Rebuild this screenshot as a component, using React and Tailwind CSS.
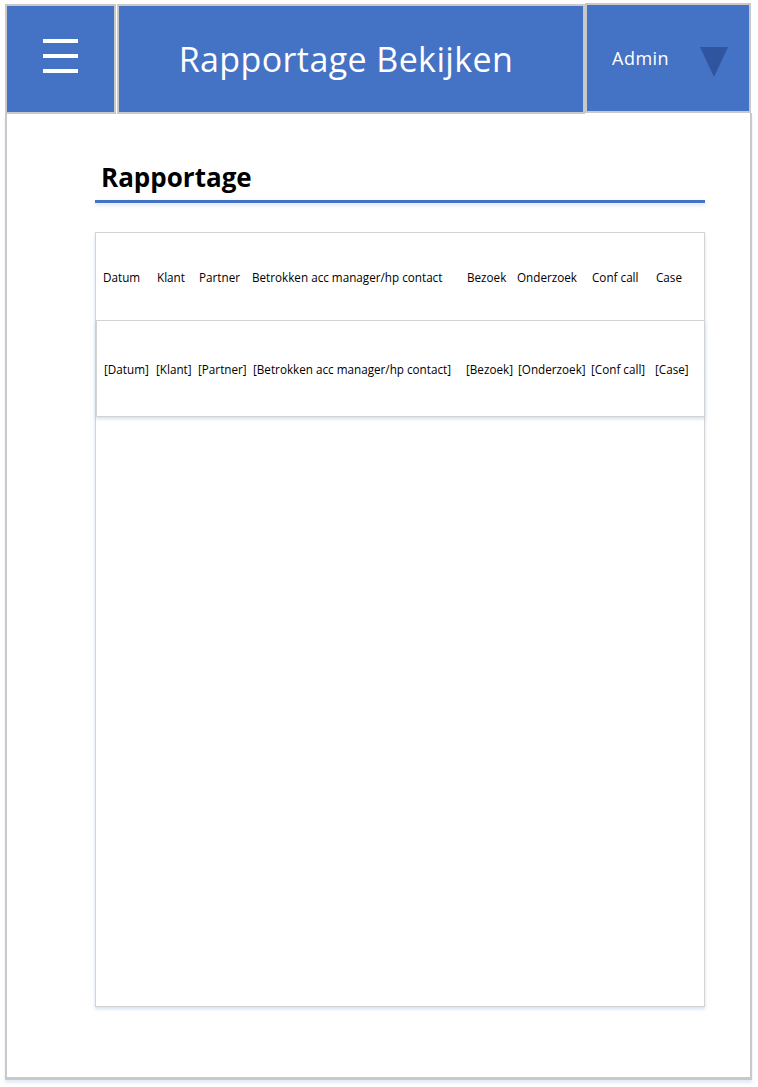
import React from 'react';

const columns = [
  { label: 'Datum', value: '[Datum]' },
  { label: 'Klant', value: '[Klant]' },
  { label: 'Partner', value: '[Partner]' },
  { label: 'Betrokken acc manager/hp contact', value: '[Betrokken acc manager/hp contact]' },
  { label: 'Bezoek', value: '[Bezoek]' },
  { label: 'Onderzoek', value: '[Onderzoek]' },
  { label: 'Conf call', value: '[Conf call]' },
  { label: 'Case', value: '[Case]' },
];

// column tracks measured off the mockup
const gridCols = 'grid grid-cols-[52px_42px_55px_213px_52px_73px_64px_1fr]';

const App = () => {
  return (
    <div
      className="min-h-[1087px] w-[758px] bg-white"
      style={{ fontFamily: '"Open Sans", "Noto Sans", sans-serif' }}
    >
      <div className="pl-[5px] pt-[4px]">
        {/* header bar */}
        <div className="flex h-[110px] w-[746px] text-white">
          <div className="flex w-[111px] items-center justify-center border-2 border-[#c9c9c9] bg-[#4472c4]">
            <svg width="38" height="36" viewBox="0 0 38 36" className="ml-[1px] mt-[-6px]">
              <rect x="1" y="1" width="35" height="4" fill="#fff" />
              <rect x="1" y="16" width="35" height="4" fill="#fff" />
              <rect x="1" y="31" width="35" height="4" fill="#fff" />
            </svg>
          </div>
          <div className="ml-[1px] flex w-[468px] items-center justify-center border-2 border-[#c9c9c9] bg-[#4472c4] pr-[10px]">
            <h1 className="text-[34px] tracking-[0.4px]">Rapportage Bekijken</h1>
          </div>
          <div className="mt-[-1px] flex h-[110px] w-[166px] items-center border-2 border-[#c9c9c9] bg-[#4472c4] pl-[25px]">
            <span className="text-[18px] tracking-[0.5px]">Admin</span>
            <svg width="28" height="30" viewBox="0 0 28 30" className="ml-[31px] mt-[8px]">
              <polygon points="0,0 28,0 14,30" fill="#2f55a1" />
            </svg>
          </div>
        </div>

        {/* page frame */}
        <div className="mt-[-1px] h-[967px] w-[747px] border-x-2 border-b-[3px] border-[#c9c9c9] bg-white pt-[47px] pl-[88px] shadow-[0_3px_3px_rgba(180,205,240,0.4)]">
          <h2 className="pl-[6px] text-[26px] font-bold leading-[34px] text-black">Rapportage</h2>
          <div className="mt-[6px] h-[3px] w-[610px] bg-[#4472c4] shadow-[0_2px_4px_rgba(160,190,235,0.5)]" />

          <div className="mt-[29px] h-[775px] w-[610px] border border-[#d3d3d3] bg-white shadow-[0_2px_3px_rgba(170,195,235,0.5)]">
            <div className={`${gridCols} h-[87px] items-center pl-[7px] pt-[3px] text-[11.7px] text-black`}>
              {columns.map((c, i) => (
                <span key={c.label} className={`whitespace-nowrap ${i === 0 || i === 3 || i === 5 ? '' : 'pl-[2px]'}`}>
                  {c.label}
                </span>
              ))}
            </div>
            <div className={`${gridCols} mr-[-1px] h-[97px] items-center border border-[#d3d3d3] pl-[7px] pt-[3px] text-[11.7px] text-black shadow-[0_2px_3px_rgba(170,195,235,0.5)]`}>
              {columns.map((c) => (
                <span key={c.value} className="whitespace-nowrap">{c.value}</span>
              ))}
            </div>
          </div>
        </div>
      </div>
    </div>
  );
};

export default App;
